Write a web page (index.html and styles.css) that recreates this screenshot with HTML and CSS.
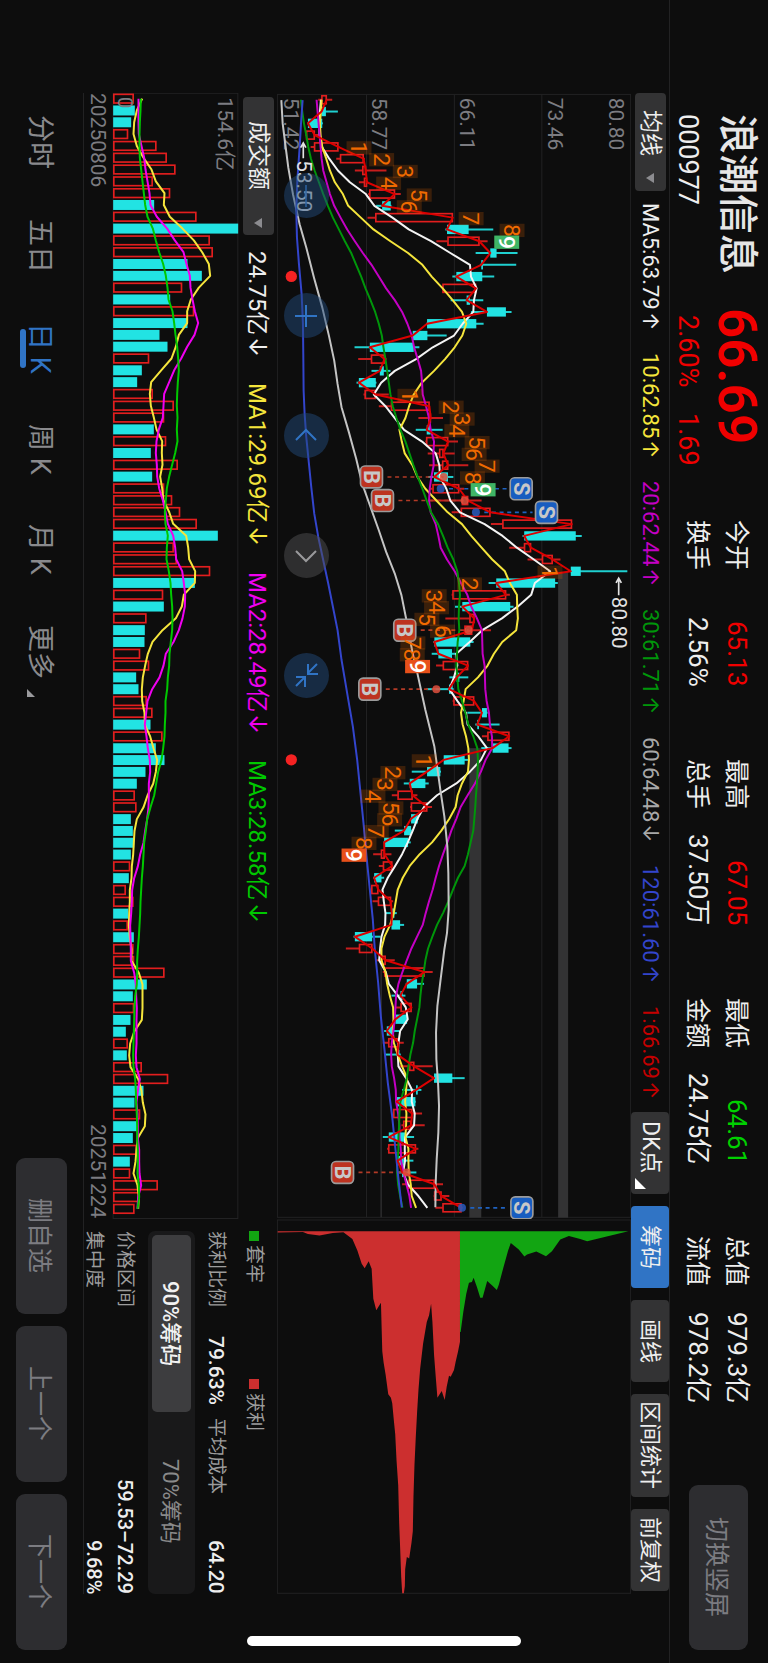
FILE: index.html
```html
<!DOCTYPE html>
<html lang="zh-CN">
<head>
<meta charset="utf-8">
<meta name="viewport" content="width=device-width, initial-scale=1">
<title>浪潮信息 000977</title>
<link rel="stylesheet" href="styles.css">
</head>
<body>
<div class="screen">
  <header class="quote">
    <div class="identity">
      <h1 class="stock-name">浪潮信息</h1>
      <span class="stock-code">000977</span>
    </div>
    <div class="last">
      <strong class="last-price">66.69</strong>
      <span class="last-change"><span>2.60%</span><span>1.69</span></span>
    </div>
    <dl class="facts">
      <div class="fact"><dt>今开</dt><dd class="up">65.13</dd></div>
      <div class="fact"><dt>最高</dt><dd class="up">67.05</dd></div>
      <div class="fact"><dt>最低</dt><dd class="down">64.61</dd></div>
      <div class="fact"><dt>总值</dt><dd>979.3亿</dd></div>
      <div class="fact"><dt>换手</dt><dd>2.56%</dd></div>
      <div class="fact"><dt>总手</dt><dd>37.50万</dd></div>
      <div class="fact"><dt>金额</dt><dd>24.75亿</dd></div>
      <div class="fact"><dt>流值</dt><dd>978.2亿</dd></div>
    </dl>
    <button class="btn btn-rotate" type="button">切换竖屏</button>
  </header>

  <div class="toolbar">
    <button class="menu-btn menu-ma" type="button" aria-haspopup="menu">均线<svg class="caret" viewBox="0 0 8 10" aria-hidden="true"><path d="M8 0v10L0 5z"/></svg></button>
    <ul class="ma-list">
      <li class="c-white">MA5:63.79<i>↑</i></li>
      <li class="c-yellow">10:62.85<i>↑</i></li>
      <li class="c-magenta">20:62.44<i>↑</i></li>
      <li class="c-green">30:61.71<i>↑</i></li>
      <li class="c-grey">60:64.48<i>↓</i></li>
      <li class="c-blue">120:61.60<i>↑</i></li>
      <li class="c-red">1:66.69<i>↑</i></li>
    </ul>
    <div class="tools">
      <button class="tool tool-dk" type="button">DK点<svg class="corner" viewBox="0 0 12 12" aria-hidden="true"><path d="M0 0v12h12z"/></svg></button>
      <button class="tool tool-on" type="button" aria-pressed="true">筹码</button>
      <button class="tool" type="button">画线</button>
      <button class="tool tool-wide" type="button">区间统计</button>
      <button class="tool" type="button">前复权</button>
    </div>
  </div>

  <main class="body">
    <section class="price" aria-label="日K线">
      <svg id="price" class="plot" viewBox="24 39 1064 3377" role="img" aria-label="日K线图"></svg>
      <div class="controls">
        <button class="round" type="button" aria-label="缩小"><svg viewBox="0 0 45 45"><path d="M22 12v22"/></svg></button>
        <button class="round" type="button" aria-label="放大"><svg viewBox="0 0 45 45"><path class="strong" d="M22 12v22M11 23h22"/></svg></button>
        <button class="round" type="button" aria-label="左移"><svg viewBox="0 0 45 45"><path class="strong" d="M12 27l10-10 10 10"/></svg></button>
        <button class="round round-off" type="button" aria-label="右移"><svg viewBox="0 0 45 45"><path d="M12 18l10 10 10-10"/></svg></button>
        <button class="round" type="button" aria-label="收起"><svg viewBox="0 0 45 45"><path class="strong" d="M33 11l-9 9M24 11v10h10M12 33l9-9M12 24h9v10"/></svg></button>
      </div>
    </section>

    <section class="chips" aria-label="筹码分布">
      <svg class="plot" viewBox="22 12 1066 1126" role="img" aria-label="筹码分布图">
        <rect class="frame" x="23" y="13" width="1064" height="1124"/>
        <polygon class="chip-win" points="24,47 573,47 573,380 567,410 560,440 555,465 545,485 540,482 533,515 527,555 518,528 505,548 500,485 495,420 490,320 486,265 480,300 473,320 462,385 453,462 448,525 444,590 440,665 436,750 433,845 431,950 427,985 420,1032 413,1028 408,1065 407,1115 404,1137 399,1137 396,1088 393,1005 390,928 387,812 382,738 378,658 374,618 369,565 365,548 357,538 349,478 343,442 339,408 335,262 321,285 312,250 307,160 298,137 286,158 277,145 264,105 249,70 222,50 190,52 150,60 115,55 100,49 24,51"/>
        <polygon class="chip-lose" points="573,47 1080,47 956,77 935,70 901,61 875,72 850,107 832,122 803,108 775,117 767,123 750,102 726,82 718,105 704,155 690,208 684,224 670,210 655,197 641,247 634,247 624,215 614,187 609,200 600,202 592,235 583,290 575,350 573,350"/>
      </svg>
    </section>

    <section class="volume" aria-label="成交额">
      <div class="volume-head">
        <button class="menu-btn menu-vol" type="button" aria-haspopup="menu">成交额<svg class="caret" viewBox="0 0 8 10" aria-hidden="true"><path d="M8 0v10L0 5z"/></svg></button>
        <ul class="vol-list">
          <li>24.75亿<i>↓</i></li>
          <li class="c-yellow">MA1:29.69亿<i>↓</i></li>
          <li class="c-pink">MA2:28.49亿<i>↓</i></li>
          <li class="c-lime">MA3:28.58亿<i>↓</i></li>
        </ul>
      </div>
      <div class="volume-plot">
        <svg id="volume" class="plot" viewBox="336 39 376 3377" role="img" aria-label="成交额柱状图"></svg>
      </div>
      <div class="dates"><time datetime="2025-08-06">20250806</time><time datetime="2025-12-24">20251224</time></div>
    </section>

    <section class="chip-info">
      <div class="legend">
        <span class="key key-lose">套牢</span>
        <span class="key key-win">获利</span>
      </div>
      <div class="info-row info-pair">
        <span>获利比例</span><b>79.63%</b><span>平均成本</span><b>64.20</b>
      </div>
      <div class="segment">
        <button class="seg seg-on" type="button" aria-pressed="true">90%筹码</button>
        <button class="seg" type="button" aria-pressed="false">70%筹码</button>
      </div>
      <div class="info-row"><span>价格区间</span><b>59.53–72.29</b></div>
      <div class="info-row info-last"><span>集中度</span><b>9.68%</b></div>
    </section>
  </main>

  <footer class="bottom">
    <nav class="tabs">
      <a class="tab" href="#">分时</a>
      <a class="tab" href="#">五日</a>
      <a class="tab tab-on" href="#" aria-current="page">日 K</a>
      <a class="tab" href="#">周 K</a>
      <a class="tab" href="#">月 K</a>
      <a class="tab tab-more" href="#">更多<svg viewBox="0 0 8 8" aria-hidden="true"><path d="M0 0v8h8z"/></svg></a>
    </nav>
    <div class="pager">
      <button class="btn" type="button">删自选</button>
      <button class="btn" type="button">上一个</button>
      <button class="btn" type="button">下一个</button>
    </div>
  </footer>
  <div class="home-bar"></div>
</div>
<script src="chart.js"></script>
</body>
</html>
```

FILE: styles.css
```css
* { box-sizing: border-box; margin: 0; padding: 0; }

:root {
  --bg: #0d0d0d;
  --line: #222223;
  --panel: #333334;
  --button: #2d2d30;
  --muted: #7c7c81;
  --red: #f00000;
  --blue: #3074c5;
}

body {
  background: var(--bg);
  color: #eee;
  font-family: Roboto, "Noto Sans CJK SC", sans-serif;
}

button {
  border: 0;
  color: inherit;
  font: inherit;
  writing-mode: vertical-rl;
  text-orientation: sideways;
  cursor: pointer;
}

ul { list-style: none; }
a { color: inherit; text-decoration: none; }
i { margin-inline-start: 2px; font-family: Inter, sans-serif; font-style: normal; }

/* The landscape page reads top to bottom with its rows stacked right to left. */
.screen {
  position: relative;
  writing-mode: vertical-rl;
  text-orientation: sideways;
  width: 100vw;
  min-height: 100vh;
  display: flex;
  flex-direction: column;
  white-space: nowrap;
}

/* Quote header */
.quote {
  flex: none;
  block-size: 98px;
  display: flex;
  align-items: flex-start;
  padding-inline: 114px 13px;
}
.identity, .last { display: flex; flex-direction: column; }
.identity { inline-size: 194px; padding-block-start: 8px; gap: 7px; }
.last { inline-size: 212px; padding-block-start: 8px; gap: 7px; color: var(--red); }
.stock-name { font-size: 40px; font-weight: 500; line-height: 46px; color: #e6e6e6; }
.stock-code, .last-change { font-size: 27px; line-height: 38px; }
.last-price { font-size: 53px; font-weight: 600; line-height: 46px; }
.last-change { display: flex; gap: 26px; padding-inline-start: 7px; }
.facts {
  flex: 1;
  display: grid;
  grid-template-columns: repeat(4, 1fr);
  column-gap: 72px;
  padding-block-start: 12px;
  font-size: 26px;
  line-height: 39px;
}
.fact { display: flex; justify-content: space-between; }
.fact dt { font-size: 25px; }
.up { color: var(--red); }
.down { color: #00d000; }
.btn {
  background: var(--button);
  color: var(--muted);
  border-radius: 9px;
  font-size: 25px;
  text-align: center;
}
.btn-rotate { inline-size: 165px; block-size: 59px; margin-block-start: 20px; margin-inline-start: 82px; }

/* Indicator toolbar */
.toolbar {
  flex: none;
  block-size: 39px;
  display: flex;
  align-items: center;
  padding-inline: 93px 72px;
  border-block-start: 1px solid var(--line);
}
.menu-btn {
  display: flex;
  align-items: center;
  justify-content: space-between;
  block-size: 31px;
  padding-block-start: 1px;
  background: var(--panel);
  border-radius: 4px;
  font-size: 23px;
  line-height: 30px;
}
.menu-ma { inline-size: 98px; padding-inline: 17px 8px; }
.menu-vol { inline-size: 138px; padding-inline: 24px 7px; }
.caret { width: 8px; height: 10px; fill: #8c8c90; }
.ma-list { flex: 1; display: flex; justify-content: space-between; padding-inline: 12px 13px; font-size: 22px; line-height: 38px; }
.tools { display: flex; gap: 12px; block-size: 38px; }
.tool {
  position: relative;
  inline-size: 82px;
  background: var(--panel);
  border-radius: 4px;
  font-size: 22px;
  line-height: 34px;
  text-align: center;
}
.tool-wide { inline-size: 103px; }
.tool-dk { padding-inline-end: 12px; font-size: 23px; }
.tool-on { background: var(--blue); }
.corner { position: absolute; left: 4px; bottom: 5px; width: 11px; height: 11px; fill: #fff; }

.c-yellow { color: #f5e53c; }
.c-magenta { color: #c400c4; }
.c-green { color: #00960a; }
.c-grey { color: #a8a8a8; }
.c-blue { color: #3345cc; }
.c-red { color: #c40000; }
.c-pink { color: #f000f0; }
.c-lime { color: #00c800; }

/* Charts and chip panel */
.body {
  flex: 1;
  min-block-size: 0;
  display: grid;
  grid-template-columns: 3fr 1fr;
  grid-template-rows: minmax(0, 1fr) 193px;
  margin-inline: 93px 69px;
  border-block-end: 1px solid var(--line);
}
.price { position: relative; }
.price, .chips, .volume, .chip-info { min-inline-size: 0; min-block-size: 0; }
.plot { display: block; width: 100%; height: 100%; writing-mode: horizontal-tb; }
.controls {
  position: absolute;
  inset-inline-start: 80px;
  inset-block-end: 7px;
  display: flex;
  gap: 75px;
}
.round { width: 45px; height: 45px; border-radius: 50%; background: rgba(34, 74, 122, 0.5); }
.round svg { display: block; width: 45px; height: 45px; }
.round path { fill: none; stroke: #2c63a3; stroke-width: 1.5; }
.round .strong { stroke: #3074c5; stroke-width: 2; }
.round-off { background: rgba(80, 80, 82, 0.5); }
.round-off path { stroke: #9a9a9c; stroke-width: 2; }

.volume { display: flex; flex-direction: column; }
.volume-head { display: flex; align-items: center; block-size: 38px; padding-inline-start: 4px; }
.vol-list { display: flex; gap: 26px; padding-inline-start: 16px; font-size: 24px; line-height: 36px; margin-block-start: 2px; }
.volume-plot { flex: 1; min-block-size: 0; }
.dates { display: flex; justify-content: space-between; font-size: 21px; line-height: 28px; color: var(--muted); }

.chip-info { padding-block-start: 12px; padding-inline-start: 12px; font-size: 19px; line-height: 22px; color: #9c9c9c; }
.chip-info b { font-size: 20px; font-weight: 500; color: #eee; }
.legend { display: flex; margin-block-end: 16px; }
.key { display: flex; align-items: center; gap: 4px; inline-size: 148px; }
.key::before { content: ""; inline-size: 10px; block-size: 10px; background: #12a512; }
.key-win::before { background: #cc2f2f; }
.info-row { display: flex; justify-content: space-between; }
.info-row b { line-height: 22px; }
.info-pair { display: grid; grid-template-columns: 105px 82px 1fr auto; }
.info-pair b { font-size: 21px; }
.info-last { margin-block-start: 9px; }
.segment {
  display: flex;
  block-size: 47px;
  margin-block: 10px 12px;
  padding: 4px;
  border-radius: 7px;
  background: #19191a;
}
.seg { flex: 1; padding-block-start: 3px; background: none; border-radius: 5px; font-size: 22px; color: #8a8a8a; text-align: center; }
.seg-on { background: #3d3d3f; color: #f2f2f2; font-weight: 500; }

/* Footer */
.bottom {
  flex: none;
  block-size: 83px;
  display: flex;
  align-items: center;
  justify-content: space-between;
  padding-inline: 115px 13px;
}
.tabs { display: flex; gap: 50px; margin-block-start: 4px; font-size: 27px; line-height: 40px; color: #8a8a8d; }
.tab { position: relative; }
.tab-on { color: var(--blue); }
.tab-on::after {
  content: "";
  position: absolute;
  inset-block-end: 0;
  inset-inline: 6px;
  block-size: 6px;
  border-radius: 3px;
  background: var(--blue);
}
.tab-more { display: flex; gap: 10px; }
.tab-more svg { align-self: flex-end; width: 8px; height: 8px; margin-block-end: 7px; fill: #9a9a9d; }
.pager { display: flex; gap: 12px; }
.pager .btn { inline-size: 156px; block-size: 51px; }
.home-bar {
  position: absolute;
  left: 0;
  right: 0;
  bottom: 17px;
  width: 274px;
  height: 10px;
  margin: 0 auto;
  border-radius: 5px;
  background: #fff;
}

/* Plot parts */
.frame, .grid { fill: none; stroke: var(--line); stroke-width: 3; }
.grid-strong { stroke: #303031; stroke-width: 4; }
.band { fill: #333334; }
.chip-win { fill: #cc2f2f; }
.chip-lose { fill: #12a512; }
.rise { fill: none; stroke: #e21e1e; stroke-width: 5; }
.fall { fill: #22e3e3; stroke: none; }
.wick-rise { stroke: #c81d1d; stroke-width: 6; }
.wick-fall { stroke: #1fd0d0; stroke-width: 6; }
.curve { fill: none; stroke-width: 6; stroke-linejoin: round; }
.axis { fill: var(--muted); font-size: 63px; }
.note { fill: #e2e2e2; font-size: 62px; }
.note-arrow { fill: none; stroke: #e2e2e2; stroke-width: 5; }
.count { fill: #f06a00; font-size: 69px; }
.count-box { fill: #f06a00; fill-opacity: 0.2; }
.count-buy { fill: #e8501a; }
.count-sell { fill: #3fb565; }
.count-last { fill: #fff; font-size: 69px; font-weight: 500; }
.mark { stroke: #9b9b9b; stroke-width: 5; }
.mark-letter { fill: #c8c8c8; font-size: 66px; font-weight: 700; text-anchor: middle; }
.mark-line { stroke-width: 5; stroke-dasharray: 12 11; }
.alert { fill: #f52222; }
```

FILE: chart.js
```js
const NS = "http://www.w3.org/2000/svg";
const STEP = 35.43;
const FIRST = 56;
const rowY = (i) => FIRST + i * STEP;

function add(parent, tag, attrs, text) {
  const el = document.createElementNS(NS, tag);
  for (const key in attrs) el.setAttribute(key, attrs[key]);
  if (text !== undefined) el.textContent = text;
  parent.appendChild(el);
  return el;
}
function label(parent, cls, x, y, text) {
  add(parent, "text", { class: cls, transform: `translate(${x} ${y}) rotate(90)` }, text);
}
function curve(parent, color, pts) {
  add(parent, "polyline", { class: "curve", stroke: color, points: pts.map((p) => p.join(",")).join(" ") });
}
// Moving average; "lead" holds the values that depend on days before the window.
function average(values, n, lead) {
  return values.map((v, i) => {
    if (i < lead.length) return [lead[i], rowY(i)];
    let sum = 0;
    for (let k = i - n + 1; k <= i; k++) sum += values[k];
    return [Math.round(sum / n), rowY(i)];
  });
}

// direction, low, body start, body end, high, turnover
const days = [
  ["R",148,158,173,190,399],["C",155,158,171,207,402],["C",115,117,160,162,391],["R",110,112,137,148,382],
  ["R",125,136,208,212,467],["R",202,214,284,288,498],["R",258,281,291,353,524],["R",270,286,294,298,456],
  ["R",298,302,378,396,508],["C",322,340,366,368,460],["R",296,320,552,553,587],["C",530,535,600,674,712],
  ["R",503,537,632,657,627],["C",621,665,684,747,636,"R"],["C",634,638,643,743,560],["C",551,563,641,677,603],
  ["R",520,522,622,625,544],["C",546,594,604,644,508],["C",607,655,712,729,580,"R"],["C",472,475,623,645,560],
  ["C",430,432,476,534,476],["C",257,303,435,452,500],["R",268,307,347,353,445],["C",308,333,345,365,423],
  ["C",263,270,321,323,409],["R",284,288,320,360,456],["R",330,367,482,484,519],["R",449,480,486,523,490],
  ["C",441,474,486,522,459],["R",470,473,538,568,496],["R",477,512,524,558,450,"C"],["R",481,521,538,599,531],
  ["C",478,496,538,554,454],["R",484,492,571,587,490],["R",484,580,598,639,514],["R",549,577,665,667,538],
  ["R",667,702,910,911,588],["C",762,767,922,940,651],["R",722,767,787,790,519],["R",777,821,852,876,528],
  ["C",905,907,937,1077,628,"R"],["C",660,683,860,868,582],["R",549,552,712,724,487],["C",559,581,725,735,489],
  ["R",530,603,617,618,437],["R",583,588,610,667,432,"C"],["C",494,497,605,615,431],["C",489,509,550,562,418,"R"],
  ["R",502,523,598,600,445],["C",542,564,572,599,406],["C",473,541,552,555,413],["R",552,555,616,618,438],
  ["C",596,640,655,657,455,"R"],["C",620,626,631,693,449],["R",640,657,722,724,485],["C",638,672,720,729,465],
  ["C",524,525,588,603,491],["C",429,475,515,517,434],["C",405,423,470,480,408],["R",369,387,431,446,402],
  ["R",424,427,475,490,407],["C",424,427,447,450,390],["C",378,406,427,430,396],["C",344,346,418,426,400],
  ["R",313,337,347,368,390,"C"],["R",330,343,370,373,388],["C",313,316,338,346,384],["R",305,308,328,330,375],
  ["R",311,328,366,373,398],["C",350,369,377,384,382],["C",366,368,394,406,381,"R"],["C",254,258,310,335,399],
  ["R",231,271,310,313,398],["R",320,338,350,378,400],["R",342,347,467,492,491],["C",411,414,445,466,438],
  ["C",368,395,402,410,396],["R",379,396,428,430,400],["C",378,380,415,417,389],["C",346,354,372,391,375],
  ["R",342,359,389,405,381],["C",348,386,392,396,378],["R",393,422,436,492,423],["C",494,496,551,588,502,"R"],
  ["C",400,442,447,458,428],["C",381,384,440,441,401],["R",372,374,430,460,418],["R",398,404,427,468,410,"C"],
  ["C",342,360,411,436,396],["R",355,359,441,449,408],["C",383,387,405,434,387],["C",390,400,404,443,388,"R"],
  ["R",400,418,497,523,471],["R",495,497,518,542,415],["R",500,522,578,582,401],
];

const closes = days.map((d) => (d[0] === "R" ? d[3] : d[2]));
const price = document.getElementById("price");

// Grid
add(price, "rect", { class: "frame", x: 25, y: 40, width: 1062, height: 3375 });
for (const x of [293, 557, 820]) add(price, "path", { class: "grid", d: `M${x} 40V3415` });
add(price, "path", { class: "grid-strong", d: "M337 2600V3415" });
add(price, "rect", { class: "band", x: 602, y: 2005, width: 36, height: 1411 });
add(price, "rect", { class: "band", x: 869, y: 1475, width: 30, height: 1941 });
[[45, "51.42"], [310, "58.77"], [574, "66.11"], [840, "73.46"], [1022, "80.80"]].forEach(([x, t]) => label(price, "axis", x, 50, t));

// Candles
days.forEach(([dir, low, a, b, high], i) => {
  const y = rowY(i);
  if (dir === "R") {
    add(price, "path", { class: "wick-rise", d: `M${low} ${y}H${a}M${b} ${y}H${high}` });
    add(price, "rect", { class: "rise", x: a + 1, y: y - 12, width: Math.max(b - a - 2, 4), height: 24 });
  } else {
    add(price, "path", { class: "wick-fall", d: `M${low} ${y}H${high}` });
    add(price, "rect", { class: "fall", x: a, y: y - 14, width: b - a, height: 28 });
  }
});

// Buy and sell signals
const signals = [
  ["B", 32, 308, 525], ["B", 34, 341, 588], ["B", 45, 408, 600], ["B", 50, 303, 503], ["B", 91, 221, 414],
  ["S", 33, 758, 516], ["S", 35, 834, 622], ["S", 94, 760, 580],
];
for (const [kind, i, x, dot] of signals) {
  const y = rowY(i), buy = kind === "B";
  add(price, "path", { class: "mark-line", stroke: buy ? "#b23a26" : "#1f62c0", d: buy ? `M${x + 48} ${y}H${dot}` : `M${dot + 25} ${y}H${x - 42}` });
}

// Averages
const greyLine = [[37,57],[41,127],[50,198],[58,260],[72,340],[92,430],[112,500],[135,590],[160,680],[180,765],[196,840],[206,910],[218,980],[240,1055],[262,1135],[280,1210],[305,1280],[330,1350],[352,1415],[378,1480],[398,1545],[412,1615],[425,1685],[436,1740],[446,1780],[470,1890],[497,2000],[515,2130],[527,2210],[536,2300],[539,2380],[540,2490],[535,2560],[527,2610],[517,2690],[506,2780],[502,2860],[503,2940],[508,3010],[511,3080],[509,3160],[504,3240],[501,3310],[500,3385]];
const blueLine = [[101,57],[96,130],[92,200],[85,300],[82,390],[84,470],[90,550],[98,640],[102,730],[103,820],[104,930],[107,1000],[112,1070],[120,1150],[127,1220],[136,1300],[148,1370],[163,1440],[178,1510],[192,1580],[206,1650],[218,1740],[235,1840],[252,1940],[265,2040],[275,2140],[284,2230],[293,2330],[302,2420],[312,2520],[318,2610],[328,2710],[336,2810],[347,2910],[357,3010],[370,3110],[380,3210],[388,3290],[399,3385]];
curve(price, "#f4f4f4", average(closes, 5, [156, 153, 150, 152]));
curve(price, "#f5e53c", average(closes, 10, [158, 156, 153, 155, 160, 172, 183, 198, 222]));
curve(price, "#c400c4", average(closes, 20, [143,146,149,152,155,158,163,173,183,196,215,235,258,282,308,330,352,378,400]));
curve(price, "#00960a", average(closes, 30, [96,100,105,112,118,126,137,150,163,177,192,210,228,247,262,277,290,305,319,330,339,344,350,355,360,365,372,383,395]));
curve(price, "#c4c4c4", greyLine);
curve(price, "#3345cc", blueLine);
curve(price, "#dc0000", closes.map((c, i) => [c, rowY(i)]));

for (const [kind, i, x, dot] of signals) {
  const y = rowY(i), buy = kind === "B";
  add(price, "circle", { cx: dot, cy: y, r: 12, fill: buy ? "#e0503e" : "#2a5cc0", "fill-opacity": 0.85 });
  add(price, "rect", { class: "mark", x: x - 33, y: y - 33, width: 66, height: 66, rx: 13, fill: buy ? "#bd3320" : "#185dc0" });
  label(price, "mark-letter", x - 23, y, kind);
}

// Nine-turn counts
const counts = [
  [4, [233, 301, 372, 322, 414, 384, 570, 693, 677], "count-sell"],
  [25, [386, 510, 543, 527, 588, 579, 618, 574, 606], "count-sell"],
  [40, [807, 565, 459, 466, 437, 484, 395, 393, 409], "count-buy"],
  [56, [429, 335, 311, 275, 329, 325, 285, 248, 218], "count-buy"],
];
for (const [start, xs, lastClass] of counts) {
  xs.forEach((x, k) => {
    const y = rowY(start + k) + 3, last = k === 8;
    add(price, "rect", { class: last ? lastClass : "count-box", x, y: y - 20, width: 75, height: 40 });
    label(price, last ? "count-last" : "count", x + 14, y - 19, k + 1);
  });
}

// Extremes and alerts
add(price, "path", { class: "note-arrow", d: "M103 232V186M95 200l8-14 8 14M1051 1545V1494M1043 1508l8-14 8 14" });
label(price, "note", 84, 238, "53.50");
label(price, "note", 1030, 1550, "80.80");
add(price, "circle", { class: "alert", cx: 67, cy: 587, r: 17 });
add(price, "circle", { class: "alert", cx: 67, cy: 2040, r: 17 });

// Turnover
const volume = document.getElementById("volume");
add(volume, "path", { class: "frame", d: "M337 40H711V3415H337Z" });
days.forEach((d, i) => {
  const y = rowY(i), rise = (d[6] || d[0]) === "R";
  if (rise) add(volume, "rect", { class: "rise", x: 339, y: y - 13, width: d[5] - 341, height: 26 });
  else add(volume, "rect", { class: "fall", x: 337, y: y - 15, width: d[5] - 337, height: 30 });
});
label(volume, "axis", 352, 50, "0");
label(volume, "axis", 652, 52, "154.6亿");
const turnover = days.map((d) => d[5]);
curve(volume, "#f5e53c", average(turnover, 5, [424, 408, 400, 398]));
curve(volume, "#f000f0", average(turnover, 10, [413, 413, 413, 414, 422, 430, 434, 440, 446]));
curve(volume, "#00c800", average(turnover, 20, [420,419,417,416,416,417,421,425,429,433,440,456,465,475,487,495,500,503,515]));
```
